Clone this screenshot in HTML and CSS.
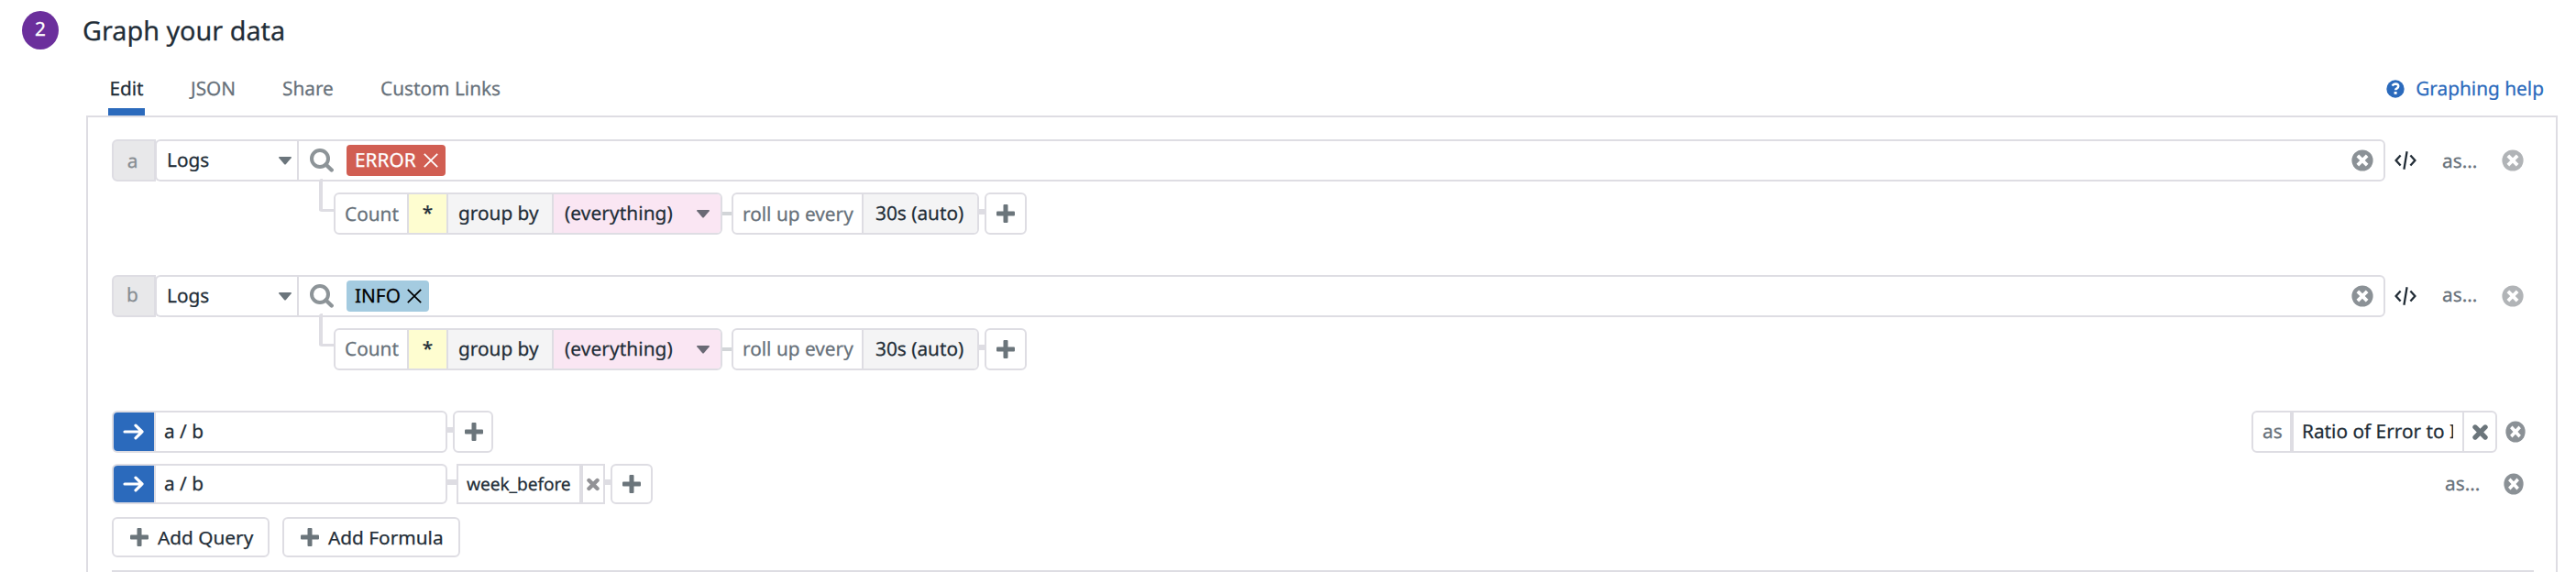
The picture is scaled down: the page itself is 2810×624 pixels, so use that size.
FILE: index.html
```html
<!DOCTYPE html>
<html lang="en">
<head>
<meta charset="utf-8">
<title>Graph your data</title>
<link rel="stylesheet" href="styles.css">
</head>
<body>
<svg class="sprite" aria-hidden="true">
  <symbol id="plus" viewBox="0 0 20 20"><rect x="7.500" y="0" width="5" height="20" rx="1"/><rect x="0" y="7.500" width="20" height="5" rx="1"/></symbol>
  <symbol id="caret" viewBox="0 0 14 9"><path d="M.8 0h12.400q1.200.2.500 1.200L8 8q-1 1.100-2 0L.3 1.200Q-.4.2.8 0z"/></symbol>
  <symbol id="search" viewBox="0 0 26 26"><circle cx="11" cy="11" r="9" fill="none" stroke="currentColor" stroke-width="4"/><path d="M17.500 17.500l6.200 6" fill="none" stroke="currentColor" stroke-width="4.400" stroke-linecap="round"/></symbol>
  <symbol id="thin-x" viewBox="0 0 16 16"><path d="M.8.8l14.400 14.400M15.200.8L.8 15.200" fill="none" stroke="currentColor" stroke-width="1.700"/></symbol>
  <symbol id="bold-x" viewBox="0 0 16 16"><path d="M2.800 2.800l10.400 10.400M13.200 2.800L2.800 13.200" fill="none" stroke="currentColor" stroke-width="5" stroke-linecap="round"/></symbol>
  <symbol id="circle-x" viewBox="0 0 24 24" preserveAspectRatio="none"><circle cx="12" cy="12" r="11.600"/><path d="M8.200 8.200l7.600 7.600M15.800 8.200l-7.600 7.600" fill="none" stroke="#fff" stroke-width="3.800" stroke-linecap="square"/></symbol>
  <symbol id="code" viewBox="0 0 24 20"><path d="M6.600 4.400L1.600 10l5 5.600M17.400 4.400l5 5.600-5 5.600M13.600.2L10.400 19.800" fill="none" stroke="currentColor" stroke-width="2.300"/></symbol>
  <symbol id="arrow" viewBox="0 0 24 18"><path d="M2 9h19M14 2.200L21 9l-7 6.800" fill="none" stroke="currentColor" stroke-width="3.200" stroke-linecap="round" stroke-linejoin="round"/></symbol>
  <symbol id="help" viewBox="0 0 20 20"><circle cx="10" cy="10" r="9.700"/><path d="M6.700 6.700Q7.800 4.500 10.200 4.500q3 .1 3 2.500 0 1.400-1.500 2.300-1.500.8-1.500 2" fill="none" stroke="#fff" stroke-width="2.600"/><rect x="8.600" y="13" width="3" height="2.800" fill="#fff"/></symbol>
</svg>

<header class="step">
  <span class="step-number">2</span>
  <h1 class="step-title">Graph your data</h1>
</header>

<nav class="tabs">
  <a class="tab tab-edit active">Edit</a>
  <a class="tab tab-json">JSON</a>
  <a class="tab tab-share">Share</a>
  <a class="tab">Custom Links</a>
  <a class="help"><svg class="i-help"><use href="#help"/></svg>Graphing help</a>
</nav>

<main class="panel">
  <section class="query">
    <div class="row">
      <span class="letter">a</span>
      <div class="source"><span>Logs</span><svg class="i-caret"><use href="#caret"/></svg></div>
      <div class="search">
        <svg class="i-search"><use href="#search"/></svg>
        <span class="tag tag-error">ERROR<svg class="i-thin"><use href="#thin-x"/></svg></span>
        <svg class="i-circle clear"><use href="#circle-x"/></svg>
      </div>
      <svg class="i-code"><use href="#code"/></svg>
      <span class="alias low">as...</span>
      <svg class="i-circle faded"><use href="#circle-x"/></svg>
    </div>
    <div class="row options">
      <i class="elbow"></i>
      <div class="group aggregate">
        <span class="cell count low">Count</span><span class="cell star">*</span><span class="cell by">group by</span><span class="cell every">(everything)<svg class="i-caret"><use href="#caret"/></svg></span>
      </div>
      <i class="link link-gray"></i>
      <div class="group rollup"><span class="cell roll low">roll up every</span><span class="cell auto">30s (auto)</span></div>
      <i class="link link-short"></i>
      <button class="plus"><svg class="i-plus"><use href="#plus"/></svg></button>
    </div>
  </section>

  <section class="query">
    <div class="row">
      <span class="letter letter-b">b</span>
      <div class="source"><span>Logs</span><svg class="i-caret"><use href="#caret"/></svg></div>
      <div class="search">
        <svg class="i-search"><use href="#search"/></svg>
        <span class="tag tag-info">INFO<svg class="i-thin"><use href="#thin-x"/></svg></span>
        <svg class="i-circle clear"><use href="#circle-x"/></svg>
      </div>
      <svg class="i-code"><use href="#code"/></svg>
      <span class="alias">as...</span>
      <svg class="i-circle faded"><use href="#circle-x"/></svg>
    </div>
    <div class="row options">
      <i class="elbow elbow-b"></i>
      <div class="group aggregate">
        <span class="cell count">Count</span><span class="cell star">*</span><span class="cell by">group by</span><span class="cell every">(everything)<svg class="i-caret"><use href="#caret"/></svg></span>
      </div>
      <i class="link link-gray"></i>
      <div class="group rollup"><span class="cell roll">roll up every</span><span class="cell auto">30s (auto)</span></div>
      <i class="link link-short"></i>
      <button class="plus"><svg class="i-plus"><use href="#plus"/></svg></button>
    </div>
  </section>

  <div class="row formula">
    <div class="expression"><span class="arrow"><svg class="i-arrow"><use href="#arrow"/></svg></span><span class="text">a / b</span></div>
    <i class="link link-short"></i>
    <button class="plus plus-formula"><svg class="i-plus"><use href="#plus"/></svg></button>
    <div class="group alias-box"><span class="alias-label">as</span><span class="alias-value"><span class="clip">Ratio of Error to I</span></span><span class="alias-clear"><svg class="i-bold"><use href="#bold-x"/></svg></span></div>
    <svg class="i-oval"><use href="#circle-x"/></svg>
  </div>

  <div class="row formula formula-second">
    <div class="expression"><span class="arrow"><svg class="i-arrow"><use href="#arrow"/></svg></span><span class="text">a / b</span></div>
    <i class="link link-wide"></i>
    <div class="modifier"><span class="modifier-name">week_before</span><span class="modifier-clear"><svg class="i-small"><use href="#bold-x"/></svg></span></div>
    <i class="link link-tiny"></i>
    <button class="plus"><svg class="i-plus"><use href="#plus"/></svg></button>
    <span class="alias alias-formula">as...</span>
    <svg class="i-oval"><use href="#circle-x"/></svg>
  </div>

  <div class="actions">
    <button class="action add-query"><svg class="i-plus"><use href="#plus"/></svg>Add Query</button>
    <button class="action add-formula"><svg class="i-plus"><use href="#plus"/></svg>Add Formula</button>
  </div>
  <hr class="rule">
</main>
</body>
</html>
```

FILE: styles.css
```css
* { box-sizing: border-box; }
html, body { height: 100%; }
body {
  margin: 0;
  overflow: hidden;
  display: flex;
  flex-direction: column;
  background: #fff;
  color: #222d37;
  font: 20.8px/30px "Noto Sans", "Open Sans", sans-serif;
  text-rendering: geometricPrecision;
  -webkit-text-stroke: 0.25px currentColor;
  white-space: nowrap;
}
svg { display: block; flex: none; fill: currentColor; }
button { font: inherit; color: inherit; background: #fff; margin: 0; padding: 0; }
.sprite { position: absolute; width: 0; height: 0; }

.step { display: flex; align-items: flex-start; height: 78px; flex: none; padding: 12px 0 0 24px; }
.step-number {
  width: 40px; height: 42px; border-radius: 50%;
  background: #6b2f9c; color: #fff;
  text-align: center; line-height: 41px;
}
.step-title { margin: 0 0 0 26px; font-size: 28.8px; line-height: 43px; font-weight: 400; }

.tabs { display: flex; flex: none; height: 48px; padding: 0 35px 0 118px; }
.tab { height: 48px; line-height: 38px; color: #67717a; }
.tab-edit { width: 40px; padding-left: 0; text-align: center; margin-right: 50px; }
.tab-json { width: 100px; }
.tab-share { width: 107px; }
.tab.active { color: #222d37; border-bottom: 8px solid #2b6abc; }
.help { display: flex; margin-left: auto; color: #2b6abc; line-height: 38px; }
.i-help { width: 20px; height: 20px; margin: 9px 12px 0 0; }

.panel {
  flex: 1; margin: 0 20px 0 94px; padding: 24px 0 0 26px;
  border: solid #dedde3; border-width: 2px 2px 0;
}
.row { display: flex; align-items: center; height: 46px; }
.query { margin-bottom: 44px; }

.letter {
  width: 48px; height: 46px; text-align: center; line-height: 44px; padding-right: 3px;
  background: #e8e8ea; color: #878d92;
  border: 2px solid #dedde3; border-radius: 6px 0 0 6px;
}
.letter-b { line-height: 41px; }
.source {
  display: flex; align-items: center; justify-content: space-between;
  width: 156px; height: 46px; padding: 0 7px 0 11px; margin-left: -1px;
  border: 2px solid #dedde3; border-right: 0; border-radius: 6px 0 0 6px; background: #fff;
}
.source span { padding-bottom: 1px; }
.i-caret { width: 14px; height: 9px; color: #6b757c; }
.search {
  display: flex; align-items: center; width: 2278px; height: 46px; margin-left: -1px; padding: 0 11px 0 12px;
  border: 2px solid #dedde3; border-radius: 0 6px 6px 0;
}
.i-search { width: 26px; height: 26px; color: #8d9498; }
.tag {
  display: flex; align-items: center; height: 34px; margin-left: 14px; padding: 0 8px 1px 9px;
  border-radius: 4px;
}
.tag-error { width: 108px; background: #d15e52; color: #fff; }
.tag-info { width: 90px; background: #a4cbe0; color: #000; }
.i-thin { width: 16px; height: 16px; margin-left: auto; }
.i-circle { width: 24px; height: 24px; color: #8b9196; }
.clear { margin-left: auto; }
.i-code { width: 24px; height: 20px; margin-left: 10px; }
.alias { width: 65px; margin-left: 28px; padding-bottom: 2px; color: #67717a; }
.faded { color: #b1b4b7; }

.options { position: relative; margin-top: 12px; padding-left: 242px; }
.elbow {
  position: absolute; left: 226px; top: -15px; width: 17px; height: 36px;
  border: solid #dedde3; border-width: 0 0 3px 4px; border-radius: 3px 0 0 3px;
}
.elbow-b { top: -16px; }
.group { display: flex; height: 46px; border: 2px solid #dedde3; border-radius: 6px; overflow: hidden; }
.cell { display: flex; align-items: center; padding-bottom: 1px; }
.cell + .cell { border-left: 2px solid #dedde3; }
.count { width: 78px; padding-left: 10px; color: #67717a; }
.star { width: 43px; justify-content: center; background: #fefdd0; }
.by { width: 115px; padding-left: 11px; background: #f4f4f5; }
.every { flex: 1; justify-content: space-between; padding: 0 12px 1px 12px; background: #fae6f3; letter-spacing: 0.1px; }
.every .i-caret { margin-top: 2px; color: #696974; }
.aggregate { width: 424px; }
.rollup { width: 270px; }
.roll { width: 140px; padding-left: 10px; color: #67717a; }
.auto { flex: 1; padding-left: 13px; background: #f4f4f5; }
.low, .cell.low { padding-top: 2px; padding-bottom: 0; }
.link { flex: none; height: 6px; width: 10px; background: #dedde3; margin-bottom: 4px; }
.link-gray { height: 4px; background: #d2d5d8; margin-bottom: 0; }
.link-short { width: 6px; }
.link-tiny { width: 6px; }
.plus {
  display: flex; align-items: center; justify-content: center;
  width: 46px; height: 46px; border: 2px solid #dedde3; border-radius: 6px;
}
.i-plus { width: 20px; height: 20px; color: #6b757b; }

.expression { display: flex; width: 366px; height: 100%; border: 2px solid #dedde3; border-radius: 6px; overflow: hidden; }
.arrow {
  display: flex; align-items: center; justify-content: center; width: 46px; padding-right: 1px;
  background: #2b6abc; color: #fff; border-right: 2px solid #dedde3;
}
.i-arrow { width: 24px; height: 18px; }
.text { padding: 6px 0 0 9px; }
.formula-second .text { padding-top: 5px; }
.plus-formula { width: 44px; padding-left: 2px; }
.alias-box { width: 268px; margin-left: 1918px; }
.alias-label { width: 44px; line-height: 42px; padding-left: 10px; color: #67717a; border-right: 4px solid #dedde3; }
.alias-value { width: 184px; line-height: 42px; padding-left: 9px; }
.clip { display: block; width: 165px; overflow: hidden; }
.alias-clear { display: flex; flex: 1; align-items: center; justify-content: center; border-left: 2px solid #dedde3; }
.i-bold { width: 17px; height: 17px; color: #6b757b; }
.i-oval { width: 22px; height: 24px; margin-left: 9px; color: #8b9196; }

.formula-second { height: 44px; margin-top: 12px; }
.formula-second .plus { height: 44px; }
.modifier { display: flex; width: 162px; height: 44px; border: 2px solid #dedde3; font-size: 19.2px; letter-spacing: -0.1px; }
.modifier-name { width: 136px; line-height: 39px; padding-left: 9px; border-right: 4px solid #dedde3; }
.modifier-clear { display: flex; flex: 1; align-items: center; justify-content: center; padding-right: 1px; }
.i-small { width: 14px; height: 15px; color: #929296; }
.alias-formula { width: 55px; margin-left: 1955px; padding-bottom: 0; }

.actions { display: flex; gap: 14px; margin-top: 14px; }
.action {
  display: flex; align-items: center; height: 44px; padding: 0 0 0 18px; gap: 10px;
  border: 2px solid #dedde3; border-radius: 6px;
}
.add-query { width: 172px; }
.add-formula { width: 194px; }
.rule { height: 2px; width: 2642px; margin: 14px 0 0; border: 0; background: #dedde3; }
```
